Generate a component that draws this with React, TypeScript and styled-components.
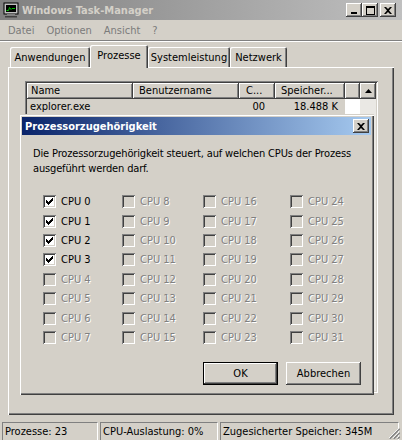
import React from 'react';
import styled, { createGlobalStyle, css } from 'styled-components';

const FACE = '#d4d0c8';
const SHADOW = '#808080';
const DARK = '#404040';
const HILITE = '#ffffff';
const FONT = `"DejaVu Sans Condensed", "DejaVu Sans", sans-serif`;

const GlobalStyle = createGlobalStyle`
  html, body {
    margin: 0;
    padding: 0;
    background: ${FACE};
  }
  body {
    font-family: ${FONT};
    font-size: 11px;
    color: #000;
  }
  * {
    box-sizing: border-box;
  }
`;

const raised = css`
  box-shadow: inset -1px -1px ${DARK}, inset 1px 1px ${HILITE}, inset -2px -2px ${SHADOW};
`;

const sunken = css`
  box-shadow: inset 1px 1px ${SHADOW}, inset -1px -1px ${HILITE}, inset 2px 2px ${DARK}, inset -2px -2px ${FACE};
`;

// Fenster
const Window = styled.div`
  position: relative;
  width: 402px;
  height: 440px;
  overflow: hidden;
  display: flex;
  flex-direction: column;
  background: ${FACE};
`;

const TitleBar = styled.div<{ $active?: boolean; $height: number }>`
  display: flex;
  align-items: center;
  height: ${(p) => p.$height}px;
  flex-shrink: 0;
  padding-left: 3px;
  background: ${(p) =>
    p.$active ? 'linear-gradient(to right, #0a246a, #a6caf0)' : 'linear-gradient(to right, #808080, #c0c0c0)'};
  color: ${(p) => (p.$active ? '#ffffff' : '#d4d0c8')};
  font-weight: bold;
  font-size: 11px;
`;

const TitleText = styled.span<{ $pad?: number }>`
  flex: 1;
  white-space: nowrap;
  padding-left: ${(p) => (p.$pad === undefined ? 3 : p.$pad)}px;
`;

const AppIcon = styled.svg`
  width: 16px;
  height: 16px;
  flex-shrink: 0;
`;

const CaptionButtons = styled.div<{ $right: number }>`
  display: flex;
  align-items: center;
  padding-right: ${(p) => p.$right}px;
`;

const CaptionButton = styled.div<{ $gap?: number }>`
  width: 16px;
  height: 14px;
  margin-left: ${(p) => p.$gap || 0}px;
  background: ${FACE};
  ${raised};
  display: flex;
  align-items: center;
  justify-content: center;
`;

const MenuBar = styled.div`
  display: flex;
  height: 20px;
  flex-shrink: 0;
  align-items: center;
  padding-left: 2px;
  color: #7b7b7b;
`;

const MenuItem = styled.span`
  padding: 0 6px;
`;

const MenuSeparator = styled.div`
  height: 2px;
  flex-shrink: 0;
  border-top: 1px solid ${SHADOW};
  border-bottom: 1px solid ${HILITE};
`;

// Registerkarten
const TabArea = styled.div`
  flex: 1;
  display: flex;
  flex-direction: column;
  padding: 0 8px 5px 8px;
`;

const TabStrip = styled.div`
  display: flex;
  align-items: flex-end;
  height: 25px;
  padding-left: 2px;
  flex-shrink: 0;
`;

const Tab = styled.div<{ $w: number; $selected?: boolean }>`
  position: relative;
  z-index: ${(p) => (p.$selected ? 2 : 0)};
  width: ${(p) => p.$w}px;
  height: ${(p) => (p.$selected ? 23 : 20)}px;
  margin-bottom: ${(p) => (p.$selected ? -1 : 0)}px;
  background: ${FACE};
  border-radius: 2px 2px 0 0;
  box-shadow: inset 1px 1px ${HILITE}, inset -1px 0 ${DARK}, inset -2px 0 ${SHADOW};
  display: flex;
  align-items: center;
  justify-content: center;
  padding-bottom: ${(p) => (p.$selected ? 2 : 0)}px;
  white-space: nowrap;
`;

const TabPanel = styled.div`
  flex: 1;
  display: flex;
  flex-direction: column;
  padding: 14px 16px 22px 17px;
  box-shadow: inset 1px 1px ${HILITE}, inset -1px -1px ${DARK}, inset -2px -2px ${SHADOW};
`;

// Prozessliste
const ListView = styled.div`
  flex: 1;
  display: flex;
  padding: 2px;
  background: #fff;
  ${sunken};
`;

const ListMain = styled.div`
  flex: 1;
  display: flex;
  flex-direction: column;
`;

const HeaderRow = styled.div`
  display: flex;
  height: 16px;
`;

const HeaderCell = styled.div<{ $w: number; $pad: number }>`
  width: ${(p) => p.$w}px;
  flex-shrink: 0;
  height: 16px;
  line-height: 15px;
  padding-left: ${(p) => p.$pad}px;
  background: ${FACE};
  ${raised};
  white-space: nowrap;
  overflow: hidden;
`;

const HeaderFiller = styled.div`
  flex: 1;
  background: ${FACE};
  ${raised};
`;

const Row = styled.div`
  display: flex;
  height: 16px;
  line-height: 16px;
`;

const Cell = styled.div<{ $w: number; $align?: string; $pad: number }>`
  width: ${(p) => p.$w}px;
  flex-shrink: 0;
  background: ${FACE};
  text-align: ${(p) => p.$align || 'left'};
  padding: 0 ${(p) => (p.$align === 'right' ? p.$pad : 0)}px 0 ${(p) => (p.$align === 'right' ? 0 : p.$pad)}px;
  white-space: nowrap;
`;

const ScrollBar = styled.div`
  width: 16px;
  display: flex;
  flex-direction: column;
  background-color: #eae8e4;
`;

const ScrollButton = styled.div`
  width: 16px;
  height: 16px;
  background: ${FACE};
  ${raised};
  display: flex;
  align-items: center;
  justify-content: center;
`;

// Dialog
const Dialog = styled.div`
  position: absolute;
  left: 19px;
  top: 114px;
  width: 355px;
  height: 281px;
  z-index: 5;
  padding: 3px;
  display: flex;
  flex-direction: column;
  background: ${FACE};
  box-shadow: inset 1px 1px ${FACE}, inset 2px 2px ${HILITE}, inset -1px -1px ${DARK}, inset -2px -2px ${SHADOW};
`;

const DialogBody = styled.div`
  flex: 1;
  display: flex;
  flex-direction: column;
  padding: 11px 10px 7px 11px;
`;

const Description = styled.p`
  margin: 0;
  line-height: 15px;
  letter-spacing: -0.15px;
`;

const CpuGrid = styled.div`
  display: grid;
  grid-template-columns: 79px 81px 87px auto;
  grid-template-rows: repeat(8, 19.4px);
  grid-auto-flow: column;
  margin: 16px 0 0 10px;
`;

const CpuItem = styled.label<{ $disabled?: boolean }>`
  display: flex;
  align-items: center;
  gap: 5px;
  color: ${(p) => (p.$disabled ? SHADOW : '#000')};
  text-shadow: ${(p) => (p.$disabled ? `1px 1px 0 ${HILITE}` : 'none')};
  white-space: nowrap;
`;

const CheckBox = styled.span<{ $disabled?: boolean }>`
  width: 13px;
  height: 13px;
  flex-shrink: 0;
  background: ${(p) => (p.$disabled ? FACE : '#fff')};
  ${sunken};
  display: flex;
  align-items: center;
  justify-content: center;
`;

const ButtonRow = styled.div`
  margin-top: auto;
  display: flex;
  justify-content: flex-end;
  gap: 8px;
`;

const Button = styled.div<{ $default?: boolean }>`
  width: 75px;
  height: 23px;
  display: flex;
  align-items: center;
  justify-content: center;
  background: ${FACE};
  box-shadow: ${(p) =>
    p.$default
      ? `inset 0 0 0 1px #000, inset -2px -2px ${DARK}, inset 2px 2px ${HILITE}, inset -3px -3px ${SHADOW}`
      : `inset -1px -1px ${DARK}, inset 1px 1px ${HILITE}, inset -2px -2px ${SHADOW}`};
`;

// Statusleiste
const StatusBar = styled.div`
  position: relative;
  display: flex;
  gap: 2px;
  height: 20px;
  flex-shrink: 0;
  padding: 2px 3px 0 2px;
`;

const StatusPane = styled.div<{ $w?: number }>`
  width: ${(p) => (p.$w ? `${p.$w}px` : 'auto')};
  flex: ${(p) => (p.$w ? '0 0 auto' : '1')};
  height: 18px;
  line-height: 18px;
  padding-left: 2px;
  border-top: 1px solid ${SHADOW};
  border-left: 1px solid ${SHADOW};
  border-right: 1px solid ${HILITE};
  white-space: nowrap;
`;

const Grip = styled.svg`
  position: absolute;
  right: 2px;
  bottom: 1px;
  width: 12px;
  height: 12px;
`;

const CheckMark = () => (
  <svg width="7" height="7" viewBox="0 0 7 7">
    <path d="M0 2h1v1h1v1h1V3h1V2h1V1h1V0h1v3H6v1H5v1H4v1H3v1H2V6H1V5H0z" fill="#000" />
  </svg>
);

const CloseGlyph = () => (
  <svg width="8" height="7" viewBox="0 0 8 7">
    <path d="M0 0h2l2 2 2-2h2L5 3.5 8 7H6L4 5 2 7H0l3-3.5z" fill="#000" />
  </svg>
);

const CPUS = Array.from({ length: 32 }, (_, i) => i);

const App = () => {
  return (
    <>
      <GlobalStyle />
      <Window>
        <TitleBar $height={20}>
          <AppIcon viewBox="0 0 16 16">
            <rect x="1" y="1" width="14" height="11" fill="#c0c0c0" stroke="#000" strokeWidth="1" />
            <rect x="3" y="3" width="10" height="7" fill="#000" />
            <path d="M3.5 8.5h2l1-3 1.5 2 1-1h3" stroke="#00c000" strokeWidth="1" fill="none" />
            <rect x="4" y="12" width="8" height="2" fill="#808080" />
            <rect x="2" y="14" width="12" height="1.5" fill="#404040" />
          </AppIcon>
          <TitleText>Windows Task-Manager</TitleText>
          <CaptionButtons $right={6}>
            <CaptionButton>
              <svg width="8" height="9" viewBox="0 0 8 9">
                <rect x="1" y="6" width="6" height="2" fill="#000" />
              </svg>
            </CaptionButton>
            <CaptionButton>
              <svg width="9" height="9" viewBox="0 0 9 9">
                <path d="M0 0h9v9H0zM1 2v6h7V2z" fill="#000" fillRule="evenodd" />
              </svg>
            </CaptionButton>
            <CaptionButton $gap={2}>
              <CloseGlyph />
            </CaptionButton>
          </CaptionButtons>
        </TitleBar>

        <MenuBar>
          <MenuItem>Datei</MenuItem>
          <MenuItem>Optionen</MenuItem>
          <MenuItem>Ansicht</MenuItem>
          <MenuItem>?</MenuItem>
        </MenuBar>
        <MenuSeparator />

        <TabArea>
          <TabStrip>
            <Tab $w={80}>Anwendungen</Tab>
            <Tab $w={58} $selected>
              Prozesse
            </Tab>
            <Tab $w={82}>Systemleistung</Tab>
            <Tab $w={57}>Netzwerk</Tab>
          </TabStrip>
          <TabPanel>
            <ListView>
              <ListMain>
                <HeaderRow>
                  <HeaderCell $w={106} $pad={4}>
                    Name
                  </HeaderCell>
                  <HeaderCell $w={106} $pad={6}>
                    Benutzername
                  </HeaderCell>
                  <HeaderCell $w={36} $pad={7}>
                    C...
                  </HeaderCell>
                  <HeaderCell $w={70} $pad={6}>
                    Speicher...
                  </HeaderCell>
                  <HeaderFiller />
                </HeaderRow>
                <Row>
                  <Cell $w={106} $pad={3}>
                    explorer.exe
                  </Cell>
                  <Cell $w={106} $pad={0} />
                  <Cell $w={36} $pad={10} $align="right">
                    00
                  </Cell>
                  <Cell $w={70} $pad={7} $align="right">
                    18.488 K
                  </Cell>
                </Row>
              </ListMain>
              <ScrollBar>
                <ScrollButton>
                  <svg width="7" height="4" viewBox="0 0 7 4">
                    <path d="M3.5 0L7 4H0z" fill="#000" />
                  </svg>
                </ScrollButton>
              </ScrollBar>
            </ListView>
          </TabPanel>
        </TabArea>

        <StatusBar>
          <StatusPane $w={96}>Prozesse: 23</StatusPane>
          <StatusPane $w={118}>CPU-Auslastung: 0%</StatusPane>
          <StatusPane>Zugesicherter Speicher: 345M</StatusPane>
          <Grip viewBox="0 0 12 12">
            <path d="M11 1L1 11M11 5L5 11M11 9L9 11" stroke={HILITE} strokeWidth="1" />
            <path d="M11.8 1.8L1.8 11.8M11.8 5.8L5.8 11.8M11.8 9.8L9.8 11.8" stroke={SHADOW} strokeWidth="1.4" />
          </Grip>
        </StatusBar>

        <Dialog>
          <TitleBar $active $height={18}>
            <TitleText $pad={0}>Prozessorzugehörigkeit</TitleText>
            <CaptionButtons $right={2}>
              <CaptionButton>
                <CloseGlyph />
              </CaptionButton>
            </CaptionButtons>
          </TitleBar>
          <DialogBody>
            <Description>
              Die Prozessorzugehörigkeit steuert, auf welchen CPUs der Prozess
              <br />
              ausgeführt werden darf.
            </Description>
            <CpuGrid>
              {CPUS.map((n) => {
                const enabled = n < 4;
                return (
                  <CpuItem key={n} $disabled={!enabled}>
                    <CheckBox $disabled={!enabled}>{enabled && <CheckMark />}</CheckBox>
                    CPU {n}
                  </CpuItem>
                );
              })}
            </CpuGrid>
            <ButtonRow>
              <Button $default>OK</Button>
              <Button>Abbrechen</Button>
            </ButtonRow>
          </DialogBody>
        </Dialog>
      </Window>
    </>
  );
};

export default App;
